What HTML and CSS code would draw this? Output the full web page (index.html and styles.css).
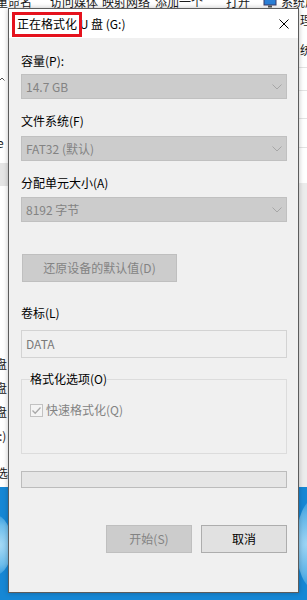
FILE: index.html
```html
<!DOCTYPE html>
<html lang="zh-CN">
<head>
<meta charset="utf-8">
<title>正在格式化 U 盘 (G:)</title>
<link rel="stylesheet" href="styles.css">
</head>
<body>
<div class="desktop">
  <div class="explorer">
    <span class="frag" style="left:-4px;top:-6px">重命名</span>
    <span class="frag" style="left:50px;top:-6px">访问媒体</span>
    <span class="frag" style="left:102px;top:-6px">映射网络</span>
    <span class="frag" style="left:155px;top:-6px">添加一个</span>
    <span class="frag" style="left:226px;top:-6px">打开</span>
    <svg class="frag-icon" width="14" height="9" viewBox="0 0 14 9"><rect x="1" y="0" width="12" height="6" fill="#2b7fd6" stroke="#3a3a6a" stroke-width="1"/><rect x="5" y="6.5" width="4" height="2" fill="#555"/></svg>
    <span class="frag" style="left:281px;top:-6px">系统属</span>

    <svg class="chev-up" width="6" height="4" viewBox="0 0 6 4"><path d="M0.5 3.5 L3 1 L5.5 3.5" fill="none" stroke="#555" stroke-width="1"/></svg>
    <span class="frag" style="left:-3px;top:135px">e</span>
    <div class="band"></div>
    <span class="frag" style="left:-5px;top:356px">盘</span>
    <span class="frag" style="left:-5px;top:380px">盘</span>
    <span class="frag" style="left:-5px;top:404px">盘</span>
    <span class="frag" style="left:-1px;top:428px">:)</span>
    <span class="frag" style="left:-4px;top:465px">选</span>

    <span class="frag" style="left:300px;top:12px">理</span>
    <span class="frag" style="left:300px;top:42px">统</span>
    <div class="rline" style="top:67px"></div>
    <div class="rline" style="top:90px"></div>
    <div class="rline" style="top:118px"></div>
    <div class="rline" style="top:147px"></div>
    <div class="rcol"></div>
  </div>
  <div class="blob blob-left"></div>
  <div class="blob blob-right"></div>

  <div class="dialog">
    <div class="titlebar">
      <span class="title"><span class="hl">正在格式化</span> U 盘 (G:)</span>
      <svg class="close" width="10" height="10" viewBox="0 0 10 10"><path d="M0.5 0.5 L9.5 9.5 M9.5 0.5 L0.5 9.5" stroke="#000" stroke-width="1" fill="none"/></svg>
    </div>
    <div class="content">
      <div class="label l1">容量(P):</div>
      <div class="combo c1"><span>14.7 GB</span><svg class="chev" width="10" height="6" viewBox="0 0 10 6"><path d="M0.5 0.5 L5 5 L9.5 0.5" fill="none" stroke="#a6a6a6" stroke-width="1"/></svg></div>

      <div class="label l2">文件系统(F)</div>
      <div class="combo c2"><span>FAT32 (默认)</span><svg class="chev" width="10" height="6" viewBox="0 0 10 6"><path d="M0.5 0.5 L5 5 L9.5 0.5" fill="none" stroke="#a6a6a6" stroke-width="1"/></svg></div>

      <div class="label l3">分配单元大小(A)</div>
      <div class="combo c3"><span>8192 字节</span><svg class="chev" width="10" height="6" viewBox="0 0 10 6"><path d="M0.5 0.5 L5 5 L9.5 0.5" fill="none" stroke="#a6a6a6" stroke-width="1"/></svg></div>

      <div class="btn btn-disabled btn-restore">还原设备的默认值(D)</div>

      <div class="label l4">卷标(L)</div>
      <div class="textbox">DATA</div>

      <fieldset class="group">
        <legend>格式化选项(O)</legend>
        <div class="check-row">
          <span class="checkbox"><svg width="11" height="11" viewBox="0 0 11 11"><path d="M1.5 5.5 L4.2 8.3 L9.5 2.5" fill="none" stroke="#a9a9a9" stroke-width="1.3"/></svg></span>
          <span class="check-label">快速格式化(Q)</span>
        </div>
      </fieldset>

      <div class="progress"></div>

      <div class="actions">
        <div class="btn btn-disabled">开始(S)</div>
        <div class="btn btn-cancel">取消</div>
      </div>
    </div>
  </div>
</div>
</body>
</html>
```

FILE: styles.css
```css
* { box-sizing: border-box; }

html, body {
  margin: 0;
  padding: 0;
}

body {
  font-family: "Noto Sans CJK SC", "Noto Sans", sans-serif;
  font-size: 12px;
  color: #000;
}

.desktop {
  position: relative;
  width: 307px;
  height: 600px;
  overflow: hidden;
  background: #1687d5;
}

.explorer {
  position: absolute;
  left: 0;
  top: 0;
  width: 307px;
  height: 487px;
  background: #ffffff;
}

.frag {
  position: absolute;
  font-size: 12px;
  line-height: 16px;
  white-space: nowrap;
  color: #1a1a1a;
}

.frag-icon {
  position: absolute;
  left: 263px;
  top: -1px;
}

.chev-up {
  position: absolute;
  left: -1px;
  top: 77px;
}

.band {
  position: absolute;
  left: 0;
  top: 163px;
  width: 8px;
  height: 23px;
  background: #e5e5e5;
}

.rline {
  position: absolute;
  left: 299px;
  width: 8px;
  height: 1px;
  background: #e3e3e3;
}

.rcol {
  position: absolute;
  left: 299px;
  top: 183px;
  width: 8px;
  height: 304px;
  background: #ececec;
}

.blob {
  position: absolute;
  border-radius: 50%;
}

.blob-left {
  left: -22px;
  top: 515px;
  width: 34px;
  height: 60px;
  background: radial-gradient(circle at 60% 50%, #a9dbf6 0%, #6cbdec 55%, #1687d5 100%);
}

.blob-right {
  left: 296px;
  top: 498px;
  width: 40px;
  height: 92px;
  background: radial-gradient(circle at 30% 50%, #9fd5f4 0%, #5fb4e8 55%, #1687d5 100%);
}

/* Dialog window */
.dialog {
  position: absolute;
  left: 8px;
  top: 8px;
  width: 291px;
  height: 585px;
  background: #f0f0f0;
  border: 1px solid #5c5c5c;
  box-shadow: 0 0 5px rgba(0, 0, 0, 0.25);
  display: flex;
  flex-direction: column;
}

.titlebar {
  height: 29px;
  flex: none;
  background: #ffffff;
  display: flex;
  align-items: center;
  justify-content: space-between;
  padding: 0 9px 0 8px;
}

.title {
  line-height: 16px;
  white-space: nowrap;
}

.hl {
  position: relative;
  display: inline-block;
  line-height: 16px;
}

.hl::after {
  content: "";
  position: absolute;
  left: -5px;
  right: -5px;
  top: -4px;
  bottom: -5px;
  border: 3px solid #e5121d;
}

.close {
  display: block;
  margin-top: 1px;
}

.content {
  flex: 1;
  display: flex;
  flex-direction: column;
  padding: 15px 11px 0 12px;
}

.label {
  line-height: 16px;
  color: #000;
}

.l2, .l3 { margin-top: 14px; }
.l4 { margin-top: 23px; }

.combo {
  height: 25px;
  background: #cccccc;
  border: 1px solid #c0c0c0;
  display: flex;
  align-items: center;
  justify-content: space-between;
  padding: 0 4px 0 4px;
  color: #838383;
  line-height: 16px;
}

.c1 { margin-top: 5px; }
.c2 { margin-top: 7px; }
.c3 { margin-top: 6px; }

.chev {
  display: block;
}

.btn {
  height: 28px;
  width: 86px;
  display: flex;
  align-items: center;
  justify-content: center;
  line-height: 16px;
  white-space: nowrap;
}

.btn-disabled {
  background: #cccccc;
  border: 1px solid #bfbfbf;
  color: #838383;
}

.btn-cancel {
  background: #e1e1e1;
  border: 1px solid #adadad;
  color: #000;
}

.btn-restore {
  width: 155px;
  margin-top: 32px;
  margin-left: 1px;
}

.textbox {
  margin-top: 9px;
  height: 28px;
  border: 1px solid #d3d3d3;
  background: #f0f0f0;
  color: #7a7a7a;
  display: flex;
  align-items: center;
  padding-left: 4px;
  line-height: 16px;
}

.group {
  margin: 13px 0 0 0;
  border: 1px solid #dcdcdc;
  padding: 15px 8px 35px 8px;
  min-width: 0;
}

.group legend {
  padding: 0;
  line-height: 16px;
  color: #000;
}

.check-row {
  display: flex;
  align-items: center;
  gap: 3px;
}

.checkbox {
  width: 13px;
  height: 13px;
  border: 1px solid #c2c2c2;
  background: #f4f4f4;
  display: flex;
  align-items: center;
  justify-content: center;
}

.checkbox svg { display: block; }

.check-label {
  line-height: 16px;
  color: #838383;
}

.progress {
  margin-top: 17px;
  height: 17px;
  border: 1px solid #bcbcbc;
  background: #e6e6e6;
}

.actions {
  margin-top: 37px;
  display: flex;
  justify-content: flex-end;
  gap: 9px;
}
```
